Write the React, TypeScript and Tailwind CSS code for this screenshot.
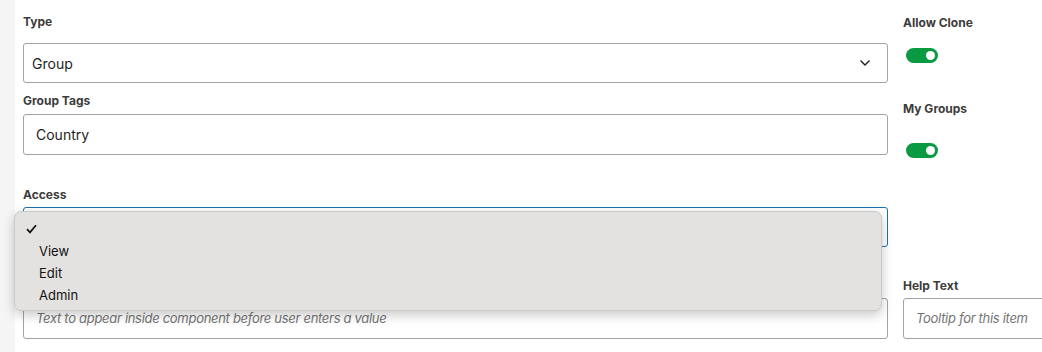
import React from "react";

function Label({ children, className = "" }: { children: React.ReactNode; className?: string }) {
  return (
    <div className={`text-[12px] leading-[16px] font-bold text-[#3c3c3c] ${className}`}>{children}</div>
  );
}

function Toggle({ className = "" }: { className?: string }) {
  return (
    <div className={`w-[32px] h-[15px] rounded-full bg-[#0a9a42] relative ${className}`}>
      <div className="absolute right-[3px] top-[3px] w-[9px] h-[9px] rounded-full bg-white" />
    </div>
  );
}

export default function App() {
  return (
    <div
      className="w-[1042px] h-[352px] overflow-hidden bg-white flex"
      style={{ fontFamily: "Inter, 'Noto Sans', Arial, sans-serif" }}
    >
      <div className="w-[15px] shrink-0 bg-[#f5f5f5]" />
      <div className="flex pl-[8px] gap-[15px]">
        {/* main column */}
        <div className="w-[865px] shrink-0 flex flex-col pt-[14px]">
          <Label>Type</Label>
          <div className="mt-[13px] h-[40px] border border-[#a3a3a3] rounded-[3px] flex items-center justify-between pl-[8px] pr-[16px] text-[14px] text-[#1e1e1e]">
            <span>Group</span>
            <svg width="12" height="8" viewBox="0 0 12 8" fill="none">
              <path d="M1.5 1.5 L6 6 L10.5 1.5" stroke="#1e1e1e" strokeWidth="1.4" />
            </svg>
          </div>
          <Label className="mt-[10px]">Group Tags</Label>
          <div className="mt-[5px] h-[41px] border border-[#a3a3a3] rounded-[3px] flex items-center pl-[12px] text-[14px] text-[#1e1e1e]">
            Country
          </div>
          <Label className="mt-[32px]">Access</Label>
          <div className="relative mt-[4px]">
            <div className="h-[40px] border border-[#1a72b0] rounded-[3px]" />
            <div className="absolute left-[-9px] top-[4px] w-[868px] h-[100px] bg-[#e3e2e1] border border-[#cbcac9] rounded-[7px] shadow-[0_4px_12px_rgba(0,0,0,0.22)] pt-[6px] text-[13px] leading-[22px] text-[#111]">
              <div className="pl-[11px] flex items-center h-[22px]">
                <svg width="11" height="10" viewBox="0 0 11 10" fill="none">
                  <path d="M1 5.2 L4 8.4 L10 1.2" stroke="#111" strokeWidth="1.7" />
                </svg>
              </div>
              <div className="pl-[24px]">View</div>
              <div className="pl-[24px]">Edit</div>
              <div className="pl-[24px]">Admin</div>
            </div>
          </div>
          <div className="mt-[51px] h-[41px] border border-[#a3a3a3] rounded-[3px] flex items-center pl-[12px] text-[13px] tracking-[-0.3px] italic text-[#757575]">
            Text to appear inside component before user enters a value
          </div>
        </div>
        {/* right column */}
        <div className="w-[290px] shrink-0 flex flex-col pt-[15px]">
          <Label>Allow Clone</Label>
          <Toggle className="mt-[17px] ml-[3px]" />
          <Label className="mt-[38px]">My Groups</Label>
          <Toggle className="mt-[26px] ml-[3px]" />
          <Label className="mt-[120px]">Help Text</Label>
          <div className="mt-[4px] h-[41px] border border-[#a3a3a3] rounded-[3px] flex items-center pl-[12px] text-[13px] tracking-[-0.3px] italic text-[#757575]">
            Tooltip for this item
          </div>
        </div>
      </div>
    </div>
  );
}
